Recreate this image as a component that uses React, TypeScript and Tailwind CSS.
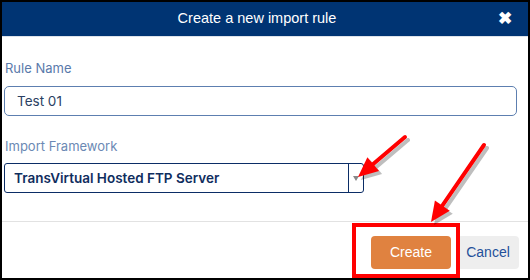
import React from 'react';

function Arrow({ x1, y1, x2, y2 }: { x1: number; y1: number; x2: number; y2: number }) {
  const dx = x2 - x1;
  const dy = y2 - y1;
  const len = Math.hypot(dx, dy);
  const ux = dx / len;
  const uy = dy / len;
  const headLen = 20;
  const headW = 9;
  const bx = x2 - ux * headLen;
  const by = y2 - uy * headLen;
  const pts = `${x2},${y2} ${bx - uy * headW},${by + ux * headW} ${bx + uy * headW},${by - ux * headW}`;
  return (
    <g>
      <g transform="translate(3,3)" opacity="0.25">
        <line x1={x1} y1={y1} x2={bx} y2={by} stroke="#000" strokeWidth="4" strokeLinecap="round" />
        <polygon points={pts} fill="#000" />
      </g>
      <line x1={x1} y1={y1} x2={bx} y2={by} stroke="#ff0000" strokeWidth="4" strokeLinecap="round" />
      <polygon points={pts} fill="#ff0000" />
    </g>
  );
}

export default function App() {
  return (
    <div className="relative w-[530px] h-[280px] border-2 border-black bg-white font-['Inter',sans-serif] overflow-hidden">
      <div className="h-[35px] bg-[#003473] border-b border-[#dde3ea] flex items-center justify-center relative pr-[16px]">
        <span className="text-white text-[14.5px] font-['Liberation_Sans',Arial,sans-serif]">Create a new import rule</span>
        <span className="absolute right-[16px] top-[8px] text-white text-[17px] leading-none font-bold">✖</span>
      </div>

      <div className="px-[2px] pt-[21px]">
        <div className="text-[13px] text-[#5a7aab] pl-[1px] leading-5">Rule Name</div>
        <div className="mt-[8px] w-[513px] h-[30px] border border-[#5d7fb0] rounded-[5px] flex items-center pl-[12px] text-[13.5px] text-[#2b3f63]">
          Test 01
        </div>

        <div className="mt-[20px] text-[13px] text-[#6b89b4] pl-[1px] leading-5">Import Framework</div>
        <div className="mt-[7px] w-[360px] h-[30px] border border-[#0b2d66] rounded-[3px] flex items-center">
          <span className="flex-1 pl-[9px] text-[13.5px] font-semibold text-[#0f2d5e]">TransVirtual Hosted FTP Server</span>
          <div className="w-[15px] h-full border-l border-[#0b2d66] flex items-center justify-center">
            <span className="w-0 h-0 border-l-[3px] border-r-[3px] border-t-[5px] border-l-transparent border-r-transparent border-t-[#888]" />
          </div>
        </div>
      </div>

      <div className="mt-[28px] border-t border-[#e2e2e2] flex justify-end gap-[6px] pr-[9px] pt-[14px] font-['Liberation_Sans',Arial,sans-serif]">
        <div className="w-[80px] h-[33px] rounded-[4px] bg-[#e08240] text-white text-[14px] flex items-center justify-center">Create</div>
        <div className="w-[62px] h-[33px] rounded-[4px] bg-[#eeeeee] text-[#24509a] text-[14px] flex items-center justify-center">Cancel</div>
      </div>

      <div className="absolute left-[350px] top-[221px] w-[108px] h-[55px] border-4 border-[#ff0000]" />

      <svg className="absolute left-0 top-0" width="530" height="280" viewBox="-2 -2 530 280">
        <Arrow x1={401} y1={133} x2={354} y2={173} />
        <Arrow x1={480} y1={141} x2={427} y2={218} />
      </svg>
    </div>
  );
}
